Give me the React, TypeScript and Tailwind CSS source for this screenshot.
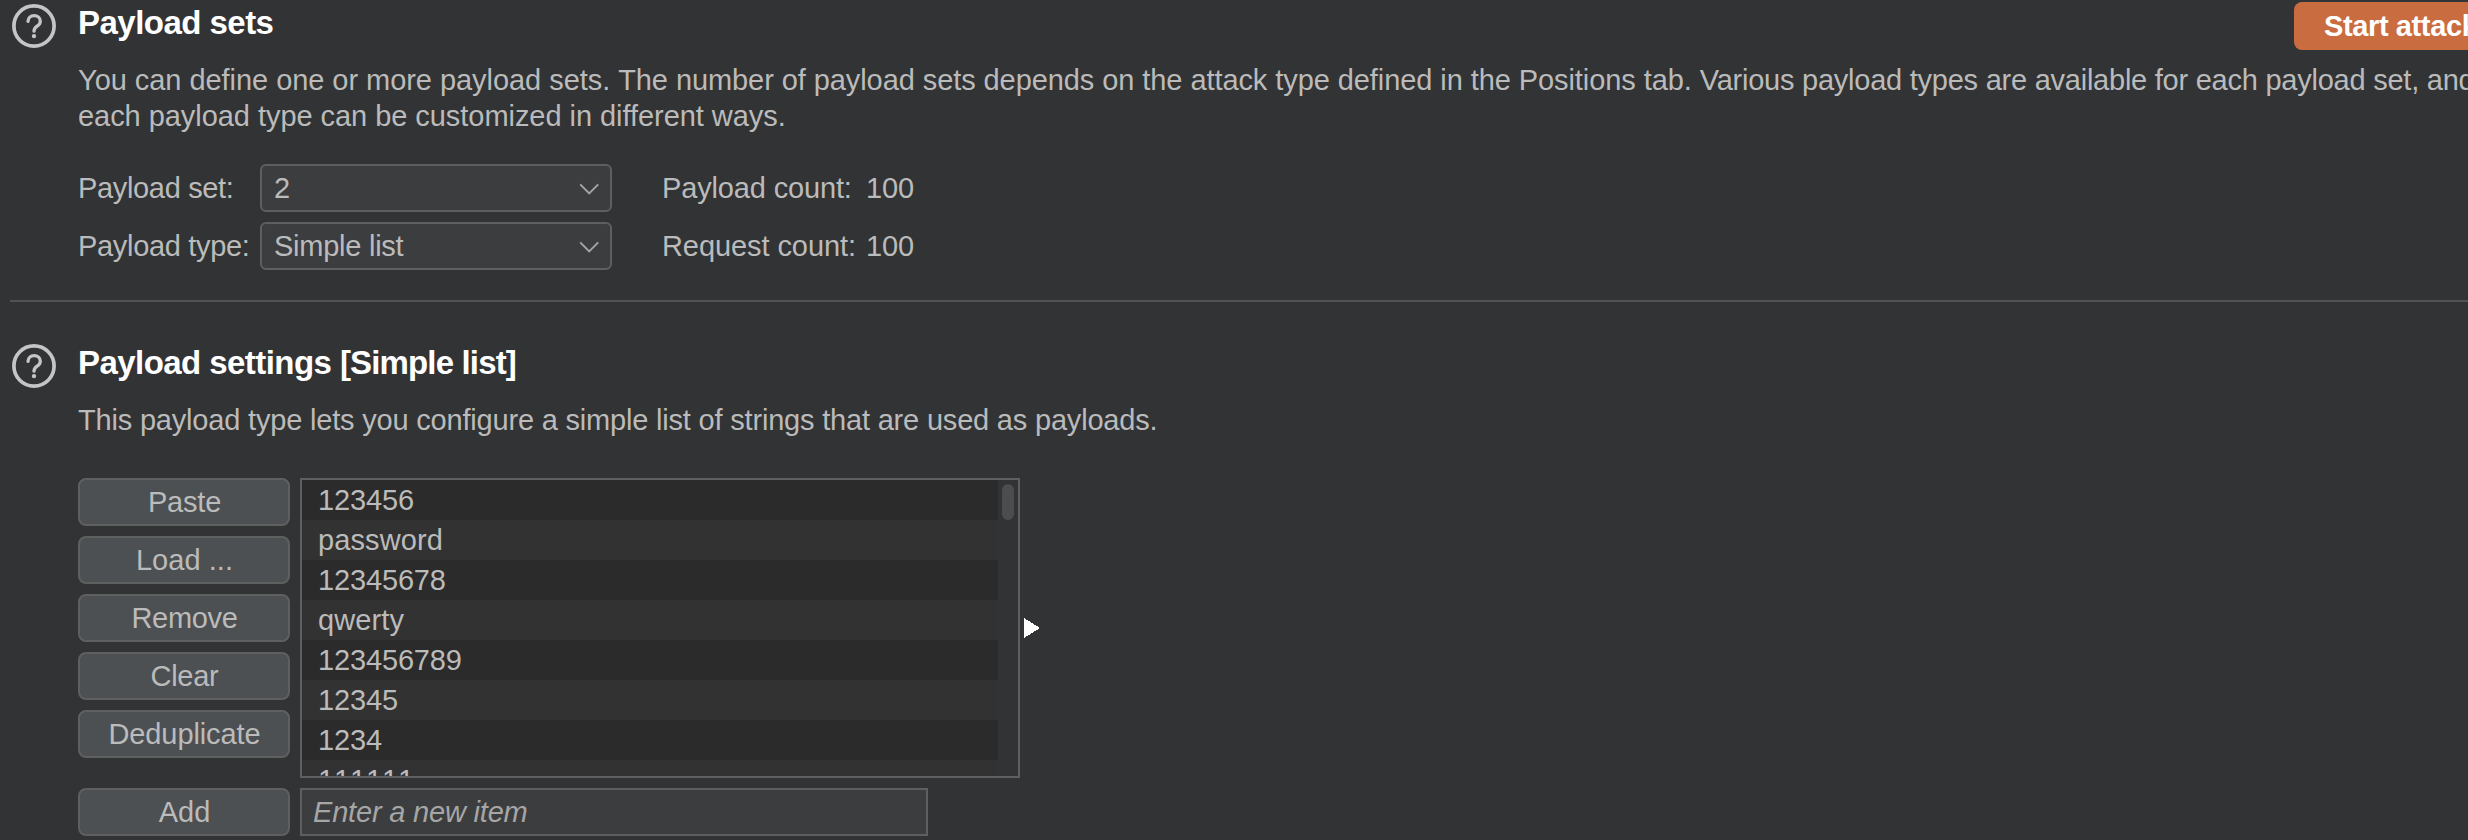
import type { ReactNode } from "react";

function HelpIcon() {
  return (
    <svg className="h-11 w-11 shrink-0" viewBox="0 0 44 44" fill="none" stroke="#c4c5c7">
      <circle cx="22" cy="22" r="20.1" strokeWidth="3.7" />
      <path d="M16 17.4C16.2 13.9 18.7 11.7 22.1 11.7C25.7 11.7 28.3 14 28.3 17.2C28.3 19.6 27 20.9 25.1 22.2C22.9 23.7 22 24.7 22 27.2" strokeWidth="3.3" strokeLinecap="round" />
      <circle cx="22" cy="32.1" r="2.2" fill="#c4c5c7" stroke="none" />
    </svg>
  );
}

function Chevron() {
  return (
    <svg className="mr-[11px] h-[14px] w-[20px]" viewBox="0 0 20 14" fill="none" stroke="#a3a4a5" strokeWidth="2">
      <path d="M1.2 3.4L10.2 12.4L19.2 3.4" />
    </svg>
  );
}

function Select({ value }: { value: string }) {
  return (
    <div className="flex h-12 w-[352px] items-center justify-between rounded-[6px] border-2 border-[#5e6060] bg-[#3c3d3f] pl-3">
      <span className="tracking-[-0.25px]">{value}</span>
      <Chevron />
    </div>
  );
}

function Button({ children, tracking }: { children: ReactNode; tracking: string }) {
  return (
    <button className={`h-12 w-[212px] rounded-[8px] border-2 border-[#5e6060] bg-[#4c5052] pl-px text-center leading-9 ${tracking}`}>
      {children}
    </button>
  );
}

const items = [
  { text: "123456", tracking: "tracking-[-0.15px]" },
  { text: "password", tracking: "tracking-[0.1px]" },
  { text: "12345678", tracking: "tracking-[-0.15px]" },
  { text: "qwerty", tracking: "tracking-[0.1px]" },
  { text: "123456789", tracking: "tracking-[-0.15px]" },
  { text: "12345", tracking: "tracking-[-0.15px]" },
  { text: "1234", tracking: "tracking-[-0.15px]" },
  { text: "111111", tracking: "tracking-[-0.15px]" },
];

export default function App() {
  return (
    <div className="h-[840px] w-[2468px] overflow-hidden bg-[#323335] font-['Liberation_Sans',Arial,sans-serif] text-[29px] leading-9 whitespace-nowrap text-[#bbbbbb]">
      <section className="flex h-[300px] gap-[22px] pt-1 pl-3">
        <HelpIcon />
        <div className="w-[2390px] overflow-visible">
          <div className="-mt-0.5 flex h-12 justify-between">
            <h2 className="pt-[3px] text-[33px] leading-9 font-bold tracking-[-0.53px] text-white">Payload sets</h2>
            <button className="h-12 w-[174px] shrink-0 overflow-hidden rounded-l-[8px] bg-[#c96d41] pl-[30px] text-left leading-9 font-bold tracking-[-0.38px] text-white">
              Start attack
            </button>
          </div>
          <p className="mt-3">
            <span className="tracking-[-0.05px]">You can define one or more payload sets. </span>
            <span className="tracking-[-0.08px]">
              The number of payload sets depends on the attack type defined in the Positions tab.{" "}
            </span>
            <span className="tracking-[-0.24px]">Various payload types are available for each payload set, and</span>
            <br />
            <span className="tracking-[-0.05px]">each payload type can be customized in different ways.</span>
          </p>
          <div className="mt-[30px] grid grid-cols-[182px_402px_204px_auto] items-center gap-y-[10px]">
            <span className="tracking-[-0.34px]">Payload set:</span>
            <Select value="2" />
            <span className="tracking-[-0.15px]">Payload count:</span>
            <span className="tracking-[-0.15px]">100</span>
            <span className="tracking-[-0.32px]">Payload type:</span>
            <Select value="Simple list" />
            <span className="tracking-[-0.08px]">Request count:</span>
            <span className="tracking-[-0.15px]">100</span>
          </div>
        </div>
      </section>

      <hr className="ml-[10px] border-0 border-t-2 border-[#505254]" />

      <section className="flex gap-[22px] pt-[42px] pl-3">
        <HelpIcon />
        <div>
          <h2 className="mt-[1px] text-[33px] leading-9 font-bold text-white">
            <span className="tracking-[-0.56px]">Payload settings </span>
            <span className="tracking-[-0.84px]">[Simple list]</span>
          </h2>
          <p className="mt-[21px] tracking-[-0.19px]">
            This payload type lets you configure a simple list of strings that are used as payloads.
          </p>
          <div className="mt-10 flex gap-[10px]">
            <div className="flex flex-col gap-[10px]">
              <Button tracking="tracking-[-0.2px]">Paste</Button>
              <Button tracking="tracking-[0.05px]">Load ...</Button>
              <Button tracking="tracking-[-0.3px]">Remove</Button>
              <Button tracking="tracking-[-0.25px]">Clear</Button>
              <Button tracking="tracking-[-0.1px]">Deduplicate</Button>
            </div>
            <div className="flex items-center gap-1">
              <div className="flex h-[300px] w-[720px] overflow-hidden border-2 border-[#5e6060]">
                <ul className="w-[696px] [font-kerning:none]">
                  {items.map((item) => (
                    <li key={item.text} className="h-10 bg-[#323232] pl-4 leading-10 odd:bg-[#2b2b2b]">
                      <span className={item.tracking}>{item.text}</span>
                    </li>
                  ))}
                </ul>
                <div className="w-5 px-1 pt-1">
                  <div className="h-9 w-3 rounded-full bg-[#4c4d4f]" />
                </div>
              </div>
              <svg className="h-5 w-4" viewBox="0 0 16 20" fill="#ffffff" shapeRendering="crispEdges">
                <path d="M0 0L16 10L0 20Z" />
              </svg>
            </div>
          </div>
          <div className="mt-[10px] flex gap-[10px]">
            <Button tracking="tracking-[0px]">Add</Button>
            <div className="h-12 w-[628px] border-2 border-[#5e6060] bg-[#3c3d3f] py-1 pl-[11px] tracking-[-0.19px] text-[#a6a6a6] italic">
              Enter a new item
            </div>
          </div>
        </div>
      </section>
    </div>
  );
}
